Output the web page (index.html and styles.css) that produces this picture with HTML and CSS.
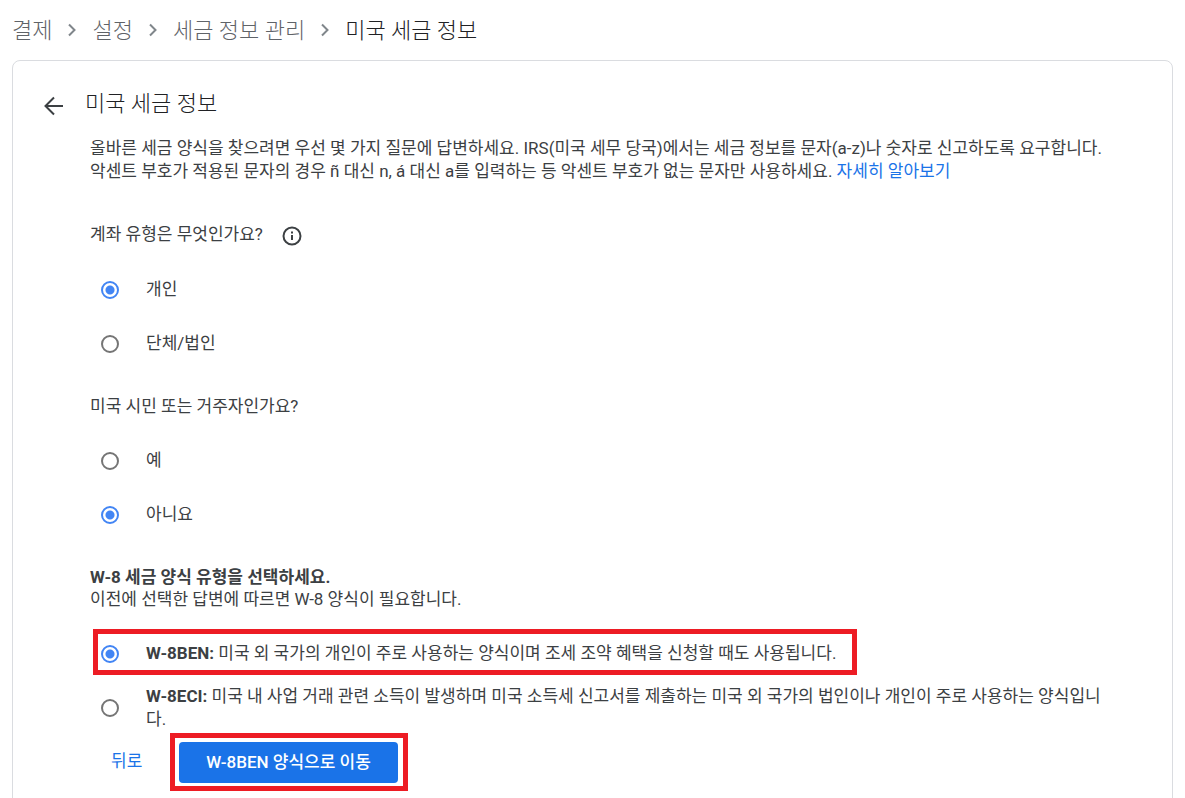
FILE: index.html
```
<!DOCTYPE html>
<html lang="ko">
<head>
<meta charset="UTF-8">
<meta name="viewport" content="width=device-width, initial-scale=1.0">
<link rel="stylesheet" href="styles.css">
<title>미국 세금 정보</title>
</head>
<body>
  <nav class="breadcrumb">
    <a href="#">결제</a>
    <svg class="chevron" viewBox="0 0 8 14"><path d="M1 1.500l5.500 5.500L1 12.500"/></svg>
    <a href="#">설정</a>
    <svg class="chevron" viewBox="0 0 8 14"><path d="M1 1.500l5.500 5.500L1 12.500"/></svg>
    <a href="#">세금 정보 관리</a>
    <svg class="chevron" viewBox="0 0 8 14"><path d="M1 1.500l5.500 5.500L1 12.500"/></svg>
    <span class="current">미국 세금 정보</span>
  </nav>

  <main class="card">
    <header class="card-header">
      <button type="button" class="icon-button" aria-label="뒤로 가기">
        <svg class="back-icon" viewBox="0 0 20 20"><path d="M19 10H2M10 1.500L1.500 10l8.500 8.500"/></svg>
      </button>
      <h1>미국 세금 정보</h1>
    </header>

    <form class="content">
      <p class="intro">올바른 세금 양식을 찾으려면 우선 몇 가지 질문에 답변하세요. IRS(미국 세무 당국)에서는 세금 정보를 문자(a-z)나 숫자로 신고하도록 요구합니다.<br>
      악센트 부호가 적용된 문자의 경우 ñ 대신 n, á 대신 a를 입력하는 등 악센트 부호가 없는 문자만 사용하세요. <a href="#">자세히 알아보기</a></p>

      <fieldset>
        <legend>계좌 유형은 무엇인가요?
          <button type="button" class="icon-button" aria-label="도움말">
            <svg class="info-icon" viewBox="0 0 20 20"><circle cx="10" cy="10" r="8.500"/><path d="M10 9v5M10 5.500v2"/></svg>
          </button>
        </legend>
        <div class="option"><label><input type="radio" name="account" checked><span>개인</span></label></div>
        <div class="option"><label><input type="radio" name="account"><span>단체/법인</span></label></div>
      </fieldset>

      <fieldset>
        <legend>미국 시민 또는 거주자인가요?</legend>
        <div class="option"><label><input type="radio" name="citizen"><span>예</span></label></div>
        <div class="option"><label><input type="radio" name="citizen" checked><span>아니요</span></label></div>
      </fieldset>

      <fieldset>
        <legend><strong>W-8 세금 양식 유형을 선택하세요.</strong><br>이전에 선택한 답변에 따르면 W-8 양식이 필요합니다.</legend>
        <div class="option"><label class="highlight"><input type="radio" name="form" checked><span><strong>W-8BEN:</strong> 미국 외 국가의 개인이 주로 사용하는 양식이며 조세 조약 혜택을 신청할 때도 사용됩니다.</span></label></div>
        <div class="option"><label><input type="radio" name="form"><span><strong>W-8ECI:</strong> 미국 내 사업 거래 관련 소득이 발생하며 미국 소득세 신고서를 제출하는 미국 외 국가의 법인이나 개인이 주로 사용하는 양식입니다.</span></label></div>
      </fieldset>

      <div class="actions">
        <button type="button" class="text-button">뒤로</button>
        <div class="primary-wrap highlight">
          <button type="submit" class="primary-button">W-8BEN 양식으로 이동</button>
        </div>
      </div>
    </form>
  </main>
</body>
</html>
```
FILE: styles.css
```
* {
  box-sizing: border-box;
}

body {
  margin: 0;
  padding: 0 12px;
  background-color: #fff;
  color: #3c4043;
  font-family: Roboto, "Noto Sans CJK KR", sans-serif;
  font-size: 17px;
  line-height: 23px;
}

a {
  color: #1a73e8;
  text-decoration: none;
}

button {
  font: inherit;
  border: none;
  background: none;
  padding: 0;
  cursor: pointer;
}

svg {
  display: block;
  fill: none;
  stroke: currentColor;
  stroke-width: 2;
}

.breadcrumb {
  display: flex;
  align-items: center;
  gap: 16px;
  height: 60px;
  font-size: 22px;
  font-weight: 300;
}

.breadcrumb a {
  color: #5f6368;
}

.breadcrumb .current {
  color: #202124;
}

.chevron {
  width: 8px;
  height: 14px;
  color: #80868b;
}

.card {
  border: 1px solid #dadce0;
  border-radius: 8px;
  padding: 28px 44px 24px 31px;
}

.card-header {
  display: flex;
  align-items: center;
  gap: 21px;
}

.icon-button {
  color: #3c4043;
}

.card-header .icon-button {
  padding-top: 4px;
}

.back-icon {
  width: 20px;
  height: 20px;
}

h1 {
  margin: 0;
  color: #202124;
  font-size: 22px;
  font-weight: 300;
  line-height: 30px;
}

.content {
  padding-left: 46px;
}

.intro {
  margin: 18px 0 40px;
}

fieldset {
  margin: 0 0 24px;
  padding: 0;
  border: none;
  min-width: 0;
}

legend {
  padding: 0;
  margin-bottom: 17px;
  line-height: 22px;
}

legend .icon-button {
  display: inline-block;
  margin-left: 15px;
  vertical-align: middle;
}

.info-icon {
  width: 20px;
  height: 20px;
}

strong {
  font-weight: 700;
}

.option {
  display: flex;
  align-items: center;
  min-height: 54px;
  padding: 0 12px 0 8px;
}

.option label {
  display: flex;
  align-items: center;
  gap: 27px;
  min-height: 36px;
  padding-left: 3px;
}

.option .highlight {
  margin-bottom: 4px;
  padding-top: 4px;
  padding-right: 16px;
}

input[type="radio"] {
  appearance: none;
  flex: none;
  width: 18px;
  height: 18px;
  margin: 0;
  border: 2px solid #757575;
  border-radius: 50%;
}

input[type="radio"]:checked {
  border-color: #4285f4;
  background: radial-gradient(#4285f4 4px, #fff 5px);
}

.highlight {
  outline: 5px solid #ed1c24;
}

.actions {
  display: flex;
  align-items: center;
  gap: 33px;
  margin-top: -21px;
  padding-left: 21px;
}

.text-button {
  color: #1a73e8;
}

.primary-wrap {
  display: flex;
  padding: 4px 5px 3px 4px;
}

.primary-button {
  height: 41px;
  padding: 0 27px;
  border-radius: 4px;
  background-color: #1a73e8;
  color: #fff;
  font-weight: 500;
}
```
